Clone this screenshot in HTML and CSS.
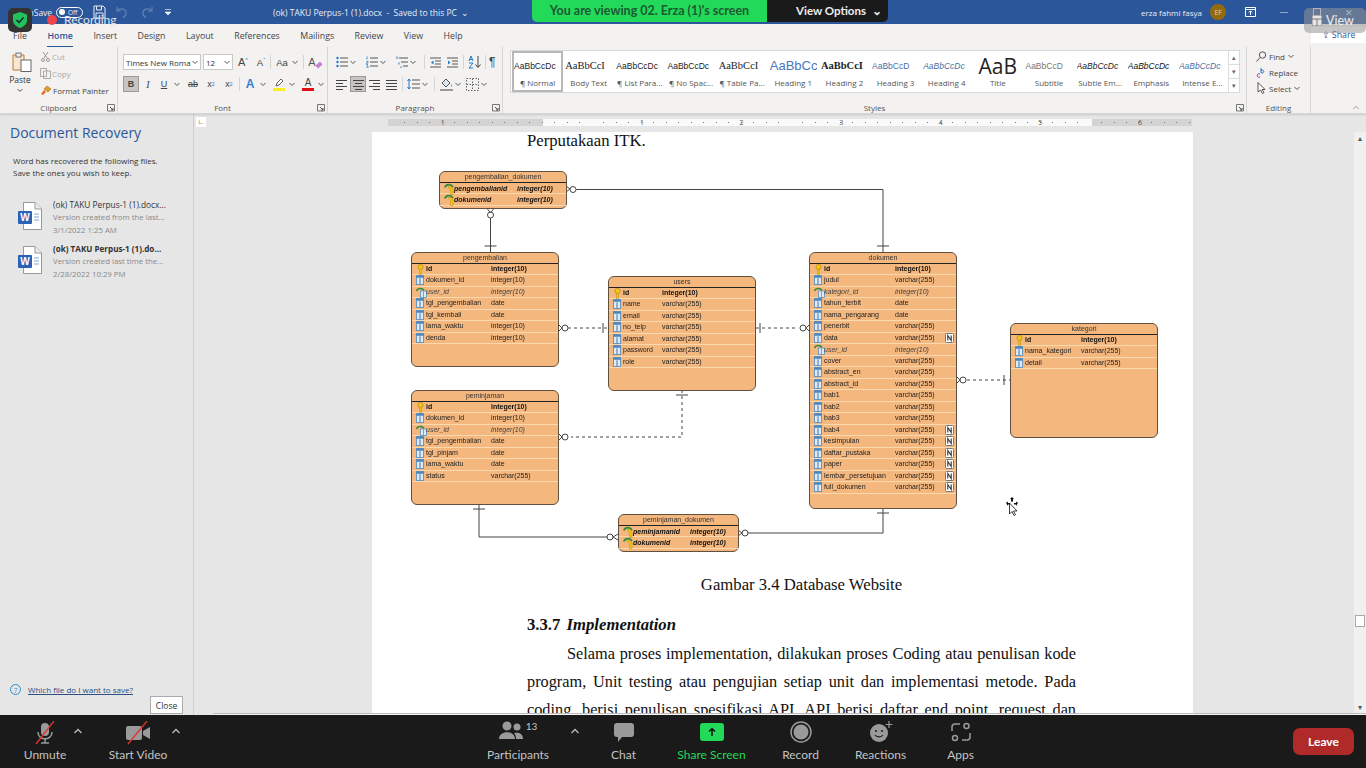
FILE: index.html

```html
<!DOCTYPE html>
<html lang="id">
<head>
  <meta charset="UTF-8">
  <title>(ok) TAKU Perpus-1 (1).docx - Word</title>
  <link rel="stylesheet" href="styles.css">
</head>
<body>

  <svg class="defs" width="0" height="0">
    <symbol id="i-col" viewBox="0 0 9 11"><rect x=".5" y=".5" width="8" height="10" fill="#dfeaf5" stroke="#5a8fc0"/><rect x=".5" y=".5" width="8" height="2.5" fill="#4a86c0"/><path d="M4.5 3.5v7" stroke="#5a8fc0" stroke-width="1.4"/></symbol>
    <symbol id="i-key" viewBox="0 0 9 11"><circle cx="4.5" cy="3" r="2.6" fill="#f5c518" stroke="#b98a10" stroke-width=".7"/><path d="M3.6 5h1.8v5.5h-1.8z" fill="#f5c518" stroke="#b98a10" stroke-width=".5"/></symbol>
    <symbol id="i-fk" viewBox="0 0 11 11"><path d="M.5 4C1.5 1 6 .5 8 3.5" fill="none" stroke="#2f8a3c" stroke-width="1.6"/><rect x="4.5" y="4" width="6" height="6.5" fill="#dfeaf5" stroke="#5a8fc0" stroke-width=".8"/><path d="M7.5 4.5v6" stroke="#5a8fc0" stroke-width=".8"/></symbol>
    <symbol id="i-pfk" viewBox="0 0 12 12"><path d="M5 3c2.500.3 4 2 4 4v4.500H6.500V7.500C6.500 6 5.500 5 4 4.500z" fill="#f5c518" stroke="#b98a10" stroke-width=".5"/><path d="M.8 4.500C2 1 7 .5 9 4" fill="none" stroke="#2f8a3c" stroke-width="1.700"/></symbol>
    <symbol id="i-null" viewBox="0 0 9 10"><rect x=".5" y=".5" width="8" height="9" rx="1" fill="#fff" stroke="#777"/><path d="M2.8 7.5v-5l3.4 5v-5" fill="none" stroke="#333" stroke-width="1.1"/></symbol>
    <symbol id="i-chev" viewBox="0 0 8 8"><path d="M1.5 3l2.500 2.500L6.500 3" fill="none" stroke="#555" stroke-width="1"/></symbol>
    <symbol id="i-caret" viewBox="0 0 10 6"><path d="M1.500 5L5 1.500 8.500 5" fill="none" stroke="#bbb" stroke-width="1.300"/></symbol>
    <symbol id="i-launch" viewBox="0 0 8 8"><path d="M.5 7V.5H7.5V7z" fill="none" stroke="#777"/><path d="M3 3l3 3M6 4v2H4" fill="none" stroke="#555"/></symbol>
    <symbol id="i-list" viewBox="0 0 12 12"><g fill="#1e78c8"><circle cx="1.5" cy="2" r="1.2"/><circle cx="1.5" cy="6" r="1.2"/><circle cx="1.5" cy="10" r="1.2"/></g><path d="M4 2h8M4 6h8M4 10h8" stroke="#555"/></symbol>
    <symbol id="i-numlist" viewBox="0 0 12 12"><path d="M1 .5v3M.5 5.5h1.500v1.500H.5v1.500H2M.5 10h1.500v2H.5" fill="none" stroke="#1e78c8" stroke-width=".8"/><path d="M4 2h8M4 6h8M4 10h8" stroke="#555"/></symbol>
    <symbol id="i-multi" viewBox="0 0 12 12"><path d="M1 .5v2.500M3 6.500v2M5 10.500v1.500" stroke="#1e78c8"/><path d="M3 2h9M5 6h7M7 10h5" stroke="#555"/></symbol>
    <symbol id="i-outdent" viewBox="0 0 11 11"><path d="M0 1h11M5 4h6M5 7h6M0 10h11" stroke="#555"/><path d="M3.500 3.500L1 5.500l2.500 2z" fill="#1e78c8"/></symbol>
    <symbol id="i-indent" viewBox="0 0 11 11"><path d="M0 1h11M5 4h6M5 7h6M0 10h11" stroke="#555"/><path d="M1 3.500l2.500 2-2.500 2z" fill="#1e78c8"/></symbol>
    <symbol id="i-left" viewBox="0 0 11 11"><path d="M0 1.500h11M0 4.500h7M0 7.500h11M0 10.500h7" stroke="#444"/></symbol>
    <symbol id="i-center" viewBox="0 0 11 11"><path d="M0 1.500h11M2 4.500h7M0 7.500h11M2 10.500h7" stroke="#444"/></symbol>
    <symbol id="i-right" viewBox="0 0 11 11"><path d="M0 1.500h11M4 4.500h7M0 7.500h11M4 10.500h7" stroke="#444"/></symbol>
    <symbol id="i-justify" viewBox="0 0 11 11"><path d="M0 1.500h11M0 4.500h11M0 7.500h11M0 10.500h11" stroke="#444"/></symbol>
    <symbol id="i-word" viewBox="0 0 24 28"><path d="M5.500.5H17l6.500 6.500v20.500h-18z" fill="#fff" stroke="#999"/><path d="M17 .5V7h6.500" fill="#eee" stroke="#999"/><path d="M16 12h5M16 15h5M16 18h5" stroke="#7fa6d6"/><rect y="9" width="14" height="13" rx="1" fill="#2b62b8"/></symbol>
  </svg>

  <header class="titlebar">
    <span class="qa-text">AutoSave</span>
    <span class="toggle"><i class="toggle-dot"></i>Off</span>
    <svg class="qa-save" width="13" height="14" viewBox="0 0 13 14"><path d="M1 1h9l2 2v10H1zM3.500 1v4h5V1M3 13V8h7v5" fill="none" stroke="#e8edf5"/></svg>
    <svg class="qa-undo" width="12" height="12" viewBox="0 0 12 12"><path d="M2 1v4h4M2 5c2-3 8-3 9 1 .5 2.500-1 4.500-3 5.500" fill="none" stroke="#5f7fb5" stroke-width="1.2"/></svg>
    <svg class="chev-dim" width="8" height="8"><use href="#i-chev"/></svg>
    <svg class="qa-redo" width="12" height="12" viewBox="0 0 12 12"><path d="M10 1v4H6M10 5C8 2 2 2 1 6c-.5 2.500 1 4.500 3 5.500" fill="none" stroke="#5f7fb5" stroke-width="1.2"/></svg>
    <svg class="qa-more" width="8" height="8" viewBox="0 0 8 8"><path d="M1 1.500h6M1 4l3 3 3-3z" fill="#e8edf5" stroke="#e8edf5" stroke-width=".7"/></svg>
    <span class="doc-title">(ok) TAKU Perpus-1 (1).docx &nbsp;-&nbsp; Saved to this PC &nbsp;⌄</span>
    <span class="user-name">erza fahmi fasya</span>
    <span class="avatar">EF</span>
    <svg class="win-display" width="11" height="10" viewBox="0 0 11 10"><path d="M.5.5h10v9H.5zM.5 2.500h10M5.500 8V4M3.800 5.500l1.700-1.700 1.700 1.700" fill="none" stroke="#fff"/></svg>
    <span class="win-min"></span>
    <span class="win-restore"></span>
    <span class="win-close">✕</span>
  </header>

  <nav class="tabs">
    <span>File</span>
    <span class="tab-active">Home</span>
    <span>Insert</span>
    <span>Design</span>
    <span>Layout</span>
    <span>References</span>
    <span>Mailings</span>
    <span>Review</span>
    <span>View</span>
    <span>Help</span>
    <span class="share-btn">⇪ Share</span>
  </nav>

  <section class="ribbon">
    <div class="group g-clipboard">
      <div class="group-body clip-body">
        <div class="paste">
          <svg class="paste-ic" width="20" height="20" viewBox="0 0 20 20"><path d="M1 3h11v15H1z" fill="#f6e6d2" stroke="#c8762a"/><rect x="4" y="1" width="5" height="4" fill="#eee" stroke="#777"/><rect x="9" y="8" width="10" height="11.500" fill="#fff" stroke="#666"/></svg>
          <span>Paste</span>
          <svg width="8" height="8"><use href="#i-chev"/></svg>
        </div>
        <div class="clip-list">
          <span class="dim"><svg width="11" height="11" viewBox="0 0 11 11"><path d="M3 1l4 6M8 1L4 7" stroke="#999"/><circle cx="3" cy="9" r="1.500" fill="none" stroke="#999"/><circle cx="8" cy="9" r="1.500" fill="none" stroke="#999"/></svg>Cut</span>
          <span class="dim"><svg width="11" height="11" viewBox="0 0 11 11"><path d="M.5.5h6v8h-6zM3.500 3h7v7.500h-7z" fill="#f3f2f1" stroke="#aaa"/></svg>Copy</span>
          <span><svg width="12" height="11" viewBox="0 0 12 11"><path d="M7 1l4 3-3 3-4-3z" fill="#e0a030" stroke="#a86a10" stroke-width=".6"/><path d="M4 5L1 9l2 1 3-3" fill="#e86a20"/></svg>Format Painter</span>
        </div>
      </div>
      <div class="group-label">Clipboard<svg class="launch" width="8" height="8"><use href="#i-launch"/></svg></div>
    </div>

    <div class="group g-font">
      <div class="group-body">
        <div class="row">
          <span class="combo combo-font">Times New Roma<svg width="8" height="8"><use href="#i-chev"/></svg></span>
          <span class="combo combo-size">12<svg width="8" height="8"><use href="#i-chev"/></svg></span>
          <span class="btn w16 ml2 glyph">A<sup>^</sup></span>
          <span class="btn w16 ml2 glyph small-a">A<sup>ˇ</sup></span>
          <i class="sep ml1"></i>
          <span class="btn w16 ml3 glyph small-a">Aa</span><svg class="chev" width="8" height="8"><use href="#i-chev"/></svg>
          <i class="sep ml3"></i>
          <span class="btn w16 ml3 glyph clear">A<i class="eraser"></i></span>
        </div>
        <div class="row">
          <span class="btn w16 on bold">B</span>
          <span class="btn w16 ml1 serif-i">I</span>
          <span class="btn w16 under">U</span><svg class="chev" width="8" height="8"><use href="#i-chev"/></svg>
          <span class="btn w16 ml3 strike">ab</span>
          <span class="btn w16 ml2 sub">x<sub>2</sub></span>
          <span class="btn w16 ml2 sub">x<sup>2</sup></span>
          <i class="sep ml2"></i>
          <span class="btn w16 ml2 effect">A</span><svg class="chev" width="8" height="8"><use href="#i-chev"/></svg>
          <span class="btn w16 ml3 hl"><svg width="12" height="10" viewBox="0 0 12 10"><path d="M3 8l1-3 4-4 2 2-4 4z" fill="#fff" stroke="#666"/></svg><i class="bar bar-y"></i></span><svg class="chev" width="8" height="8"><use href="#i-chev"/></svg>
          <span class="btn w16 ml3 hl letter">A<i class="bar bar-r"></i></span><svg class="chev" width="8" height="8"><use href="#i-chev"/></svg>
        </div>
      </div>
      <div class="group-label">Font<svg class="launch" width="8" height="8"><use href="#i-launch"/></svg></div>
    </div>

    <div class="group g-para">
      <div class="group-body">
        <div class="row">
          <svg class="ic" width="12" height="12"><use href="#i-list"/></svg><svg class="chev" width="8" height="8"><use href="#i-chev"/></svg>
          <svg class="ic ml8" width="12" height="12"><use href="#i-numlist"/></svg><svg class="chev" width="8" height="8"><use href="#i-chev"/></svg>
          <svg class="ic ml8" width="12" height="12"><use href="#i-multi"/></svg><svg class="chev" width="8" height="8"><use href="#i-chev"/></svg>
          <i class="sep ml6"></i>
          <svg class="ic ml5" width="11" height="11"><use href="#i-outdent"/></svg>
          <svg class="ic ml6" width="11" height="11"><use href="#i-indent"/></svg>
          <i class="sep ml5"></i>
          <svg class="ic ml4" width="13" height="14" viewBox="0 0 13 14"><path d="M1 6l2-5 2 5M1.500 4.500h3M1 8h4L1 13h4" fill="none" stroke="#1e78c8"/><path d="M10 1v11M7.500 9.500l2.500 3 2.500-3" fill="none" stroke="#444"/></svg>
          <i class="sep ml4"></i>
          <span class="pilcrow ml3">¶</span>
        </div>
        <div class="row">
          <svg class="ic" width="11" height="11"><use href="#i-left"/></svg>
          <span class="btn w16 on ml3"><svg width="11" height="11"><use href="#i-center"/></svg></span>
          <svg class="ic ml3" width="11" height="11"><use href="#i-right"/></svg>
          <svg class="ic ml6" width="11" height="11"><use href="#i-justify"/></svg>
          <i class="sep ml5"></i>
          <svg class="ic ml4" width="13" height="12" viewBox="0 0 13 12"><path d="M2 1v10M.5 3L2 1l1.500 2M.5 9L2 11l1.500-2" fill="none" stroke="#1e78c8"/><path d="M5 2h8M5 6h8M5 10h8" stroke="#555"/></svg><svg class="chev" width="8" height="8"><use href="#i-chev"/></svg>
          <i class="sep ml4"></i>
          <svg class="ic ml5" width="13" height="13" viewBox="0 0 13 13"><path d="M6 1L2 5l4 4 4-4z" fill="#dbe7f3" stroke="#555"/><path d="M11 6c1 1.500 1 2.500 0 3z" fill="#1e78c8"/><path d="M0 12h13" stroke="#999" stroke-width="2"/></svg><svg class="chev" width="8" height="8"><use href="#i-chev"/></svg>
          <svg class="ic ml3" width="13" height="13" viewBox="0 0 13 13"><path d="M.5.500h12v12H.5zM.5 6.500h12M6.500.500v12" fill="none" stroke="#666" stroke-dasharray="1.500 1.500"/></svg><svg class="chev" width="8" height="8"><use href="#i-chev"/></svg>
        </div>
      </div>
      <div class="group-label">Paragraph<svg class="launch" width="8" height="8"><use href="#i-launch"/></svg></div>
    </div>

    <div class="group g-styles">
      <div class="group-body gallery-wrap">
        <div class="gallery">
          <div class="style sel"><b class="s-sm">AaBbCcDc</b><span>¶ Normal</span></div>
          <div class="style"><b class="s-serif">AaBbCcI</b><span>Body Text</span></div>
          <div class="style"><b class="s-sm">AaBbCcDc</b><span>¶ List Para...</span></div>
          <div class="style"><b class="s-sm">AaBbCcDc</b><span>¶ No Spac...</span></div>
          <div class="style"><b class="s-serif">AaBbCcI</b><span>¶ Table Pa...</span></div>
          <div class="style"><b class="s-h1">AaBbCc</b><span>Heading 1</span></div>
          <div class="style"><b class="s-serif s-strong">AaBbCcI</b><span>Heading 2</span></div>
          <div class="style"><b class="s-sm s-blue">AaBbCcD</b><span>Heading 3</span></div>
          <div class="style"><b class="s-sm s-blue s-it">AaBbCcDc</b><span>Heading 4</span></div>
          <div class="style"><b class="s-title">AaB</b><span>Title</span></div>
          <div class="style"><b class="s-sm s-grey">AaBbCcD</b><span>Subtitle</span></div>
          <div class="style"><b class="s-sm s-it">AaBbCcDc</b><span>Subtle Em...</span></div>
          <div class="style"><b class="s-sm s-it s-dark">AaBbCcDc</b><span>Emphasis</span></div>
          <div class="style"><b class="s-sm s-it s-blue">AaBbCcDc</b><span>Intense E...</span></div>
          <div class="gal-scroll"><i>▴</i><i>▾</i><i>▾</i></div>
        </div>
      </div>
      <div class="group-label">Styles<svg class="launch" width="8" height="8"><use href="#i-launch"/></svg></div>
    </div>

    <div class="group g-edit">
      <div class="group-body edit-list">
        <span><svg width="11" height="11" viewBox="0 0 11 11"><circle cx="6.500" cy="4" r="3.200" fill="none" stroke="#555"/><path d="M4 6.500L.5 10.500" stroke="#555"/></svg>Find<svg width="8" height="8"><use href="#i-chev"/></svg></span>
        <span><svg width="11" height="11" viewBox="0 0 11 11"><path d="M5 1v4.500M5 3.500a1.500 1.500 0 1 1 0 2" fill="none" stroke="#2b6cc4"/><path d="M4 7a1.800 1.800 0 1 0 0 3" fill="none" stroke="#8a3ab0"/></svg>Replace</span>
        <span><svg width="11" height="12" viewBox="0 0 11 12"><path d="M2 .5v9.500l2.500-2 2 3.500 1.500-1L6 7.500h3z" fill="#fff" stroke="#555"/></svg>Select<svg width="8" height="8"><use href="#i-chev"/></svg></span>
      </div>
      <div class="group-label">Editing</div>
    </div>
    <svg class="collapse" width="8" height="5"><use href="#i-caret"/></svg>
  </section>

  <div class="work">
    <aside class="recovery">
      <h2>Document Recovery</h2>
      <p class="rec-note">Word has recovered the following files.<br>Save the ones you wish to keep.</p>
      <div class="rec-file">
        <span class="word-ic"><svg width="24" height="28"><use href="#i-word"/></svg><b>W</b></span>
        <div>
          <div class="rec-name">(ok) TAKU Perpus-1 (1).docx...</div>
          <div class="rec-sub">Version created from the last...</div>
          <div class="rec-sub">3/1/2022 1:25 AM</div>
        </div>
      </div>
      <div class="rec-file">
        <span class="word-ic"><svg width="24" height="28"><use href="#i-word"/></svg><b>W</b></span>
        <div>
          <div class="rec-name rec-bold">(ok) TAKU Perpus-1 (1).do...</div>
          <div class="rec-sub">Version created last time the...</div>
          <div class="rec-sub">2/28/2022 10:29 PM</div>
        </div>
      </div>
      <div class="rec-foot">
        <div class="rec-help"><span class="help-ic">?</span><a>Which file do I want to save?</a></div>
        <button class="rec-close">Close</button>
      </div>
    </aside>

    <main class="docarea">
      <div class="ruler-row">
        <span class="tab-sel">∟</span>
        <div class="ruler">
          <span>1</span><span></span><span>1</span><span>2</span><span>3</span><span>4</span><span>5</span><span>6</span>
        </div>
      </div>
      <div class="doc-row">
        <div class="doc-scroll">
          <article class="page">
            <p class="doc-line">Perputakaan ITK.</p>

            <div class="diagram">
              <svg class="links" width="750" height="400" viewBox="0 0 750 400">
                <g fill="none" stroke="#444" stroke-width="1">
                  <path d="M162 29.500H472V92M466 86h12"/>
                  <path d="M79.500 55V92M73.500 86h12"/>
                  <path d="M68 344V377H199M62 349h12"/>
                  <path d="M337 373H472V348M466 353h12"/>
                  <g stroke-dasharray="3 3">
                    <path d="M157 168H197"/>
                    <path d="M345 168H386"/>
                    <path d="M556 220H599"/>
                    <path d="M271 230V277H160"/>
                  </g>
                  <path d="M192 163v10M349 163v10M593 215v10M265 235h12"/>
                  <g fill="#fff">
                    <circle cx="162" cy="29.500" r="3"/>
                    <circle cx="79.500" cy="55" r="3"/>
                    <circle cx="154" cy="168" r="3"/>
                    <circle cx="392" cy="168" r="3"/>
                    <circle cx="552" cy="220" r="3"/>
                    <circle cx="154" cy="277" r="3"/>
                    <circle cx="199" cy="377" r="3"/>
                    <circle cx="334" cy="373" r="3"/>
                  </g>
                  <path d="M155 26l4 3-4 3M76.500 49l3 4 3-4M148 165l3 3-3 3M398 165l-3 3 3 3M546 217l3 3-3 3M148 274l3 3-3 3M207 374l-5 3 5 3M327 370l4 3-4 3"/>
                </g>
              </svg>

              <div class="entity e-pengdok">
                <div class="ent-name">pengembalian_dokumen</div>
                <div class="ent-row pk fk-key"><svg class="ent-ic" width="12" height="12"><use href="#i-pfk"/></svg><span>pengembalianid</span><span>integer(10)</span></div>
                <div class="ent-row pk fk-key"><svg class="ent-ic" width="12" height="12"><use href="#i-pfk"/></svg><span>dokumenid</span><span>integer(10)</span></div>
              </div>

              <div class="entity e-pengembalian">
                <div class="ent-name">pengembalian</div>
                <div class="ent-row pk"><svg class="ent-ic" width="9" height="11"><use href="#i-key"/></svg><span>id</span><span>integer(10)</span></div>
                <div class="ent-row"><svg class="ent-ic" width="8" height="10"><use href="#i-col"/></svg><span>dokumen_id</span><span>integer(10)</span></div>
                <div class="ent-row fk"><svg class="ent-ic" width="11" height="11"><use href="#i-fk"/></svg><span>user_id</span><span>integer(10)</span></div>
                <div class="ent-row"><svg class="ent-ic" width="8" height="10"><use href="#i-col"/></svg><span>tgl_pengembalian</span><span>date</span></div>
                <div class="ent-row"><svg class="ent-ic" width="8" height="10"><use href="#i-col"/></svg><span>tgl_kembali</span><span>date</span></div>
                <div class="ent-row"><svg class="ent-ic" width="8" height="10"><use href="#i-col"/></svg><span>lama_waktu</span><span>integer(10)</span></div>
                <div class="ent-row"><svg class="ent-ic" width="8" height="10"><use href="#i-col"/></svg><span>denda</span><span>integer(10)</span></div>
              </div>

              <div class="entity e-users">
                <div class="ent-name">users</div>
                <div class="ent-row pk"><svg class="ent-ic" width="9" height="11"><use href="#i-key"/></svg><span>id</span><span>integer(10)</span></div>
                <div class="ent-row"><svg class="ent-ic" width="8" height="10"><use href="#i-col"/></svg><span>name</span><span>varchar(255)</span></div>
                <div class="ent-row"><svg class="ent-ic" width="8" height="10"><use href="#i-col"/></svg><span>email</span><span>varchar(255)</span></div>
                <div class="ent-row"><svg class="ent-ic" width="8" height="10"><use href="#i-col"/></svg><span>no_telp</span><span>varchar(255)</span></div>
                <div class="ent-row"><svg class="ent-ic" width="8" height="10"><use href="#i-col"/></svg><span>alamat</span><span>varchar(255)</span></div>
                <div class="ent-row"><svg class="ent-ic" width="8" height="10"><use href="#i-col"/></svg><span>password</span><span>varchar(255)</span></div>
                <div class="ent-row"><svg class="ent-ic" width="8" height="10"><use href="#i-col"/></svg><span>role</span><span>varchar(255)</span></div>
              </div>

              <div class="entity e-dokumen">
                <div class="ent-name">dokumen</div>
                <div class="ent-row pk"><svg class="ent-ic" width="9" height="11"><use href="#i-key"/></svg><span>id</span><span>integer(10)</span></div>
                <div class="ent-row"><svg class="ent-ic" width="8" height="10"><use href="#i-col"/></svg><span>judul</span><span>varchar(255)</span></div>
                <div class="ent-row fk"><svg class="ent-ic" width="11" height="11"><use href="#i-fk"/></svg><span>kategori_id</span><span>integer(10)</span></div>
                <div class="ent-row"><svg class="ent-ic" width="8" height="10"><use href="#i-col"/></svg><span>tahun_terbit</span><span>date</span></div>
                <div class="ent-row"><svg class="ent-ic" width="8" height="10"><use href="#i-col"/></svg><span>nama_pengarang</span><span>date</span></div>
                <div class="ent-row"><svg class="ent-ic" width="8" height="10"><use href="#i-col"/></svg><span>penerbit</span><span>varchar(255)</span></div>
                <div class="ent-row"><svg class="ent-ic" width="8" height="10"><use href="#i-col"/></svg><span>data</span><span>varchar(255)</span><svg width="9" height="10"><use href="#i-null"/></svg></div>
                <div class="ent-row fk"><svg class="ent-ic" width="11" height="11"><use href="#i-fk"/></svg><span>user_id</span><span>integer(10)</span></div>
                <div class="ent-row"><svg class="ent-ic" width="8" height="10"><use href="#i-col"/></svg><span>cover</span><span>varchar(255)</span></div>
                <div class="ent-row"><svg class="ent-ic" width="8" height="10"><use href="#i-col"/></svg><span>abstract_en</span><span>varchar(255)</span></div>
                <div class="ent-row"><svg class="ent-ic" width="8" height="10"><use href="#i-col"/></svg><span>abstract_id</span><span>varchar(255)</span></div>
                <div class="ent-row"><svg class="ent-ic" width="8" height="10"><use href="#i-col"/></svg><span>bab1</span><span>varchar(255)</span></div>
                <div class="ent-row"><svg class="ent-ic" width="8" height="10"><use href="#i-col"/></svg><span>bab2</span><span>varchar(255)</span></div>
                <div class="ent-row"><svg class="ent-ic" width="8" height="10"><use href="#i-col"/></svg><span>bab3</span><span>varchar(255)</span></div>
                <div class="ent-row"><svg class="ent-ic" width="8" height="10"><use href="#i-col"/></svg><span>bab4</span><span>varchar(255)</span><svg width="9" height="10"><use href="#i-null"/></svg></div>
                <div class="ent-row"><svg class="ent-ic" width="8" height="10"><use href="#i-col"/></svg><span>kesimpulan</span><span>varchar(255)</span><svg width="9" height="10"><use href="#i-null"/></svg></div>
                <div class="ent-row"><svg class="ent-ic" width="8" height="10"><use href="#i-col"/></svg><span>daftar_pustaka</span><span>varchar(255)</span><svg width="9" height="10"><use href="#i-null"/></svg></div>
                <div class="ent-row"><svg class="ent-ic" width="8" height="10"><use href="#i-col"/></svg><span>paper</span><span>varchar(255)</span><svg width="9" height="10"><use href="#i-null"/></svg></div>
                <div class="ent-row"><svg class="ent-ic" width="8" height="10"><use href="#i-col"/></svg><span>lembar_persetujuan</span><span>varchar(255)</span><svg width="9" height="10"><use href="#i-null"/></svg></div>
                <div class="ent-row"><svg class="ent-ic" width="8" height="10"><use href="#i-col"/></svg><span>full_dokumen</span><span>varchar(255)</span><svg width="9" height="10"><use href="#i-null"/></svg></div>
              </div>

              <div class="entity e-kategori">
                <div class="ent-name">kategori</div>
                <div class="ent-row pk"><svg class="ent-ic" width="9" height="11"><use href="#i-key"/></svg><span>id</span><span>integer(10)</span></div>
                <div class="ent-row"><svg class="ent-ic" width="8" height="10"><use href="#i-col"/></svg><span>nama_kategori</span><span>varchar(255)</span></div>
                <div class="ent-row"><svg class="ent-ic" width="8" height="10"><use href="#i-col"/></svg><span>detail</span><span>varchar(255)</span></div>
              </div>

              <div class="entity e-peminjaman">
                <div class="ent-name">peminjaman</div>
                <div class="ent-row pk"><svg class="ent-ic" width="9" height="11"><use href="#i-key"/></svg><span>id</span><span>integer(10)</span></div>
                <div class="ent-row"><svg class="ent-ic" width="8" height="10"><use href="#i-col"/></svg><span>dokumen_id</span><span>integer(10)</span></div>
                <div class="ent-row fk"><svg class="ent-ic" width="11" height="11"><use href="#i-fk"/></svg><span>user_id</span><span>integer(10)</span></div>
                <div class="ent-row"><svg class="ent-ic" width="8" height="10"><use href="#i-col"/></svg><span>tgl_pengembalian</span><span>date</span></div>
                <div class="ent-row"><svg class="ent-ic" width="8" height="10"><use href="#i-col"/></svg><span>tgl_pinjam</span><span>date</span></div>
                <div class="ent-row"><svg class="ent-ic" width="8" height="10"><use href="#i-col"/></svg><span>lama_waktu</span><span>date</span></div>
                <div class="ent-row"><svg class="ent-ic" width="8" height="10"><use href="#i-col"/></svg><span>status</span><span>varchar(255)</span></div>
              </div>

              <div class="entity e-pemdok">
                <div class="ent-name">peminjaman_dokumen</div>
                <div class="ent-row pk fk-key"><svg class="ent-ic" width="12" height="12"><use href="#i-pfk"/></svg><span>peminjamanid</span><span>integer(10)</span></div>
                <div class="ent-row pk fk-key"><svg class="ent-ic" width="12" height="12"><use href="#i-pfk"/></svg><span>dokumenid</span><span>integer(10)</span></div>
              </div>
            </div>

            <p class="caption">Gambar 3.4 Database Website</p>
            <h3 class="doc-head">3.3.7 <em>Implementation</em></h3>
            <p class="doc-para">Selama proses implementation, dilakukan proses Coding atau penulisan kode program, Unit testing atau pengujian setiap unit dan implementasi metode. Pada coding, berisi penulisan spesifikasi API. API berisi daftar end point, request dan</p>
          </article>
        </div>
        <div class="vscroll"><i>▴</i><span class="thumb"></span><i>▾</i></div>
      </div>
      <div class="hscroll"></div>
    </main>
  </div>

  <footer class="zoombar">
    <div class="z-left">
      <div class="z-btn w-unmute">
        <svg width="24" height="24" viewBox="0 0 24 24"><rect x="8" y="2" width="8" height="13" rx="4" fill="#9a9a9a"/><path d="M5 11c0 9 14 9 14 0M12 18v4M8 22h8" fill="none" stroke="#9a9a9a" stroke-width="1.5"/><path d="M3 23L21 0" stroke="#e0342c" stroke-width="1.3"/></svg>
        <span>Unmute</span>
      </div>
      <div class="z-caret c-16"><svg width="10" height="6"><use href="#i-caret"/></svg></div>
      <div class="z-btn w-video">
        <svg width="26" height="24" viewBox="0 0 26 24"><rect x="1" y="5" width="16" height="14" rx="2" fill="#9a9a9a"/><path d="M18 10l7-4v12l-7-4z" fill="#9a9a9a"/><path d="M3 23L22 0" stroke="#e0342c" stroke-width="1.3"/></svg>
        <span>Start Video</span>
      </div>
      <div class="z-caret c-10"><svg width="10" height="6"><use href="#i-caret"/></svg></div>
    </div>

    <div class="z-center">
      <div class="z-btn w-part">
        <div class="part-ic">
          <svg width="24" height="18" viewBox="0 0 24 18"><circle cx="8" cy="5" r="4.500" fill="#9a9a9a"/><circle cx="18" cy="6" r="3.500" fill="#9a9a9a"/><path d="M0 18c0-9 16-9 16 0zM17 18h7c0-6-5-7-9-6 1.500 1.500 2 3.500 2 6z" fill="#9a9a9a"/></svg>
          <small>13</small>
        </div>
        <span>Participants</span>
      </div>
      <div class="z-caret c-52"><svg width="10" height="6"><use href="#i-caret"/></svg></div>
      <div class="z-btn w-chat">
        <svg width="22" height="22" viewBox="0 0 22 22"><path d="M4 2h14a3 3 0 0 1 3 3v8a3 3 0 0 1-3 3H9l-4 5v-5H4a3 3 0 0 1-3-3V5a3 3 0 0 1 3-3z" fill="#9a9a9a"/></svg>
        <span>Chat</span>
      </div>
      <div class="z-btn w-share">
        <div class="share-ic"><svg width="10" height="10" viewBox="0 0 10 10"><path d="M5 9V2M2 4.500L5 1.500l3 3" fill="none" stroke="#111" stroke-width="1.5"/></svg></div>
        <span class="green">Share Screen</span>
      </div>
      <div class="z-btn w-rec">
        <svg width="22" height="22" viewBox="0 0 22 22"><circle cx="11" cy="11" r="10" fill="none" stroke="#9a9a9a" stroke-width="1.5"/><circle cx="11" cy="11" r="7.500" fill="#9a9a9a"/></svg>
        <span>Record</span>
      </div>
      <div class="z-btn w-react">
        <svg width="24" height="22" viewBox="0 0 24 22"><circle cx="10" cy="12" r="9" fill="#9a9a9a"/><circle cx="7" cy="10" r="1" fill="#1a1a1a"/><circle cx="13" cy="10" r="1" fill="#1a1a1a"/><path d="M6 14c1.500 2.500 6.500 2.500 8 0" fill="none" stroke="#1a1a1a" stroke-width="1.1"/><path d="M20 0v7M16.500 3.500h7" stroke="#9a9a9a" stroke-width="1.2"/></svg>
        <span>Reactions</span>
      </div>
      <div class="z-btn w-apps">
        <svg width="22" height="22" viewBox="0 0 22 22"><g fill="none" stroke="#9a9a9a" stroke-width="1.5"><path d="M2 10V6a3 3 0 0 1 3-3h5M20 12v4a3 3 0 0 1-3 3h-5"/><circle cx="16.500" cy="5" r="2.500"/><circle cx="5" cy="17" r="2.500"/></g></svg>
        <span>Apps</span>
      </div>
    </div>

    <button class="leave">Leave</button>
  </footer>

  <!-- zoom overlays on top of the shared screen -->
  <div class="banner">
    <span class="banner-green">You are viewing 02. Erza (1)'s screen</span>
    <span class="banner-dark">View Options &nbsp;⌄</span>
  </div>
  <div class="secure"><svg width="14" height="16" viewBox="0 0 14 16"><path d="M7 0l7 2.500V8c0 4-3 6.500-7 8-4-1.500-7-4-7-8V2.500z" fill="#22c25a"/><path d="M3.500 8l2.500 2.500L10.500 5.500" fill="none" stroke="#123" stroke-width="1.5"/></svg></div>
  <div class="recording"><i></i>Recording</div>
  <div class="view-pill"><svg width="10" height="11" viewBox="0 0 10 11"><path d="M0 0h10v11H0zM0 4h10M5 4v7" fill="#e6e6e6" stroke="#777"/></svg>View</div>
  <svg class="cursor" width="14" height="20" viewBox="0 0 14 20"><path d="M7 0l2 2H8v2.500H6V2H5zM1 6l2-1.500V6h2v1.500H3V9zM13 6l-2-1.500V6H9v1.500h2V9z" fill="#111"/><path d="M4.500 6v11l2.500-2.500 2 4 1.500-.8-2-3.700h3.500z" fill="#fff" stroke="#111" stroke-width=".8"/></svg>

</body>
</html>
```

FILE: styles.css

```css
* {
  box-sizing: border-box;
}

html, body {
  margin: 0;
  height: 100%;
}

body {
  width: 1366px;
  height: 768px;
  overflow: hidden;
  position: relative;
  display: flex;
  flex-direction: column;
  font-family: "Open Sans", "Liberation Sans", sans-serif;
  background-color: #e6e6e6;
}

.defs {
  position: absolute;
}

/* title bar */
.titlebar {
  height: 24px;
  flex: none;
  background-color: #2b579a;
  display: flex;
  align-items: center;
  color: #e8edf5;
  font-size: 8.5px;
  padding-left: 15px;
}

.qa-text {
  width: 41px;
  white-space: nowrap;
}

.toggle {
  width: 27px;
  height: 11px;
  border: 1px solid #fff;
  border-radius: 6px;
  display: flex;
  align-items: center;
  gap: 3px;
  font-size: 6.5px;
  padding-left: 2px;
}

.toggle-dot {
  width: 6px;
  height: 6px;
  border-radius: 50%;
  background-color: #fff;
}

.qa-save {
  margin-left: 10px;
}

.qa-undo {
  margin-left: 9px;
}

.chev-dim {
  opacity: .4;
}

.qa-redo {
  margin-left: 7px;
}

.qa-more {
  margin-left: 10px;
}

.doc-title {
  margin-left: 101px;
  width: 300px;
  white-space: nowrap;
}

.user-name {
  margin-left: 568px;
  width: 69px;
  white-space: nowrap;
  font-size: 8px;
}

.avatar {
  width: 16px;
  height: 16px;
  border-radius: 50%;
  background-color: #946a10;
  color: #e8d8a8;
  font-size: 6.5px;
  display: flex;
  align-items: center;
  justify-content: center;
}

.win-display {
  margin-left: 19px;
}

.win-min {
  width: 8px;
  height: 1px;
  background-color: #8fa7cc;
  margin-left: 24px;
}

.win-restore {
  width: 8px;
  height: 8px;
  border: 1px solid #d0d8e8;
  margin-left: 25px;
}

.win-close {
  margin-left: 24px;
  font-size: 9px;
  color: #d0d8e8;
}

/* tabs */
.tabs {
  height: 23px;
  flex: none;
  background-color: #f3f2f1;
  display: flex;
  align-items: center;
  gap: 20.5px;
  padding-left: 13px;
  font-size: 8.8px;
  color: #444;
  position: relative;
}

.tabs span {
  position: relative;
}

.tab-active {
  color: #2b579a;
  font-weight: 600;
}

.tab-active::after {
  content: "";
  position: absolute;
  left: 0;
  right: 0;
  bottom: -6px;
  height: 2px;
  background-color: #2b579a;
}

.tabs .share-btn {
  margin-left: auto;
  background-color: #fff;
  height: 16px;
  width: 55px;
  color: #2b579a;
  display: flex;
  align-items: center;
  justify-content: center;
  align-self: flex-start;
  margin-top: 3px;
}

/* ribbon */
.ribbon {
  height: 67px;
  flex: none;
  background-color: #f3f2f1;
  border-bottom: 1px solid #d6d5d4;
  box-shadow: 0 1px 2px rgba(0, 0, 0, .12);
  display: flex;
  position: relative;
  z-index: 2;
  color: #444;
  font-size: 8.5px;
}

.group {
  height: 66px;
  flex: none;
  display: flex;
  flex-direction: column;
  border-right: 1px solid #d5d4d3;
}

.group-body {
  flex: 1;
  padding-top: 7px;
}

.group-label {
  height: 11px;
  text-align: center;
  font-size: 8px;
  color: #555;
  position: relative;
  line-height: 12px;
}

.launch {
  position: absolute;
  right: 2px;
  top: 2px;
}

.g-clipboard {
  width: 118px;
}

.g-font {
  width: 210px;
}

.g-para {
  width: 175px;
}

.g-styles {
  width: 744px;
}

.g-edit {
  width: 64px;
}

.clip-body {
  display: flex;
  padding-top: 4px;
}

.paste {
  width: 38px;
  padding-left: 2px;
  display: flex;
  flex-direction: column;
  align-items: center;
  gap: 1px;
  color: #333;
}

.paste-ic {
  margin: 1px 0 1px 4px;
}

.clip-list {
  display: flex;
  flex-direction: column;
  gap: 5px;
  margin: -1px 0 0 2px;
  white-space: nowrap;
  font-size: 8px;
}

.clip-list span {
  display: flex;
  align-items: center;
  gap: 1px;
  height: 12px;
}

.dim {
  color: #a8a8a8;
}

.row {
  height: 16px;
  display: flex;
  align-items: center;
  padding-left: 5px;
  margin-bottom: 6px;
}

.g-para .row {
  padding-left: 8px;
}

.combo {
  height: 16px;
  background-color: #fff;
  border: 1px solid #c8c8c8;
  display: flex;
  align-items: center;
  justify-content: space-between;
  font-size: 8px;
  padding: 0 1px 0 2px;
  white-space: nowrap;
  color: #333;
}

.combo-font {
  width: 78px;
}

.combo-size {
  width: 30px;
  margin-left: 2px;
}

.btn {
  height: 16px;
  display: inline-flex;
  align-items: center;
  justify-content: center;
  flex: none;
  position: relative;
  color: #444;
  font-family: "Liberation Sans", sans-serif;
}

.w16 {
  width: 16px;
}

.on {
  background-color: #c6c5c4;
  border: 1px solid #9a9a9a;
}

.ml1 { margin-left: 1px; }
.ml2 { margin-left: 2px; }
.ml3 { margin-left: 3px; }
.ml4 { margin-left: 4px; }
.ml5 { margin-left: 5px; }
.ml6 { margin-left: 6px; }
.ml8 { margin-left: 8px; }

.sep {
  width: 1px;
  height: 14px;
  background-color: #d5d4d3;
  flex: none;
}

.chev {
  flex: none;
  margin: 0 1px;
}

.ic {
  flex: none;
}

.glyph {
  font-size: 11px;
}

.glyph sup {
  font-size: 6px;
  color: #1e78c8;
  margin-top: -5px;
}

.small-a {
  font-size: 9.5px;
}

.clear {
  color: #555;
}

.eraser {
  width: 6px;
  height: 4px;
  background-color: #c880d8;
  transform: rotate(-40deg);
  margin-top: 6px;
}

.bold {
  font-weight: bold;
  font-size: 9px;
}

.serif-i {
  font-family: "Liberation Serif", serif;
  font-style: italic;
  font-size: 10px;
}

.under {
  text-decoration: underline;
  font-size: 9px;
}

.strike {
  text-decoration: line-through;
  font-size: 9px;
}

.sub {
  font-size: 9px;
}

.sub sub, .sub sup {
  font-size: 5px;
  color: #1e78c8;
}

.effect {
  color: #2d7fd8;
  font-weight: bold;
  font-size: 12px;
}

.hl {
  flex-direction: column;
}

.letter {
  font-size: 10px;
  line-height: 11px;
}

.bar {
  width: 12px;
  height: 3px;
}

.bar-y {
  background-color: #f8ee20;
}

.bar-r {
  background-color: #e01010;
}

.pilcrow {
  font-size: 12px;
  color: #444;
  font-family: "Liberation Sans", sans-serif;
}

/* styles gallery */
.gallery-wrap {
  padding: 3px 0 0 7px;
}

.gallery {
  width: 730px;
  height: 43px;
  background-color: #fff;
  border: 1px solid #d8d8d8;
  display: flex;
  padding-left: 1px;
}

.style {
  width: 51.15px;
  flex: none;
  height: 41px;
  display: flex;
  flex-direction: column;
  align-items: center;
  overflow: hidden;
  padding-top: 4px;
}

.style.sel {
  border: 2px solid #b8b8b8;
  padding-top: 2px;
}

.style b {
  height: 22px;
  line-height: 22px;
  font-weight: normal;
  white-space: nowrap;
  color: #222;
  width: 47px;
  overflow: hidden;
  text-align: left;
}

.style span {
  font-size: 8px;
  color: #555;
  white-space: nowrap;
}

.s-sm {
  font-family: "Liberation Sans", sans-serif;
  font-size: 8.5px;
}

.style b.s-serif {
  font-family: "Liberation Serif", serif;
  font-size: 10.5px;
}

.style b.s-strong {
  font-weight: bold;
}

.style b.s-h1 {
  font-size: 13px;
  color: #4a78c0;
  font-family: "Liberation Sans", sans-serif;
}

.style b.s-blue {
  color: #4a70a8;
}

.s-it {
  font-style: italic;
}

.style b.s-grey {
  color: #777;
}

.style b.s-dark {
  color: #111;
}

.style b.s-title {
  font-size: 21px;
  text-align: center;
  font-family: "Open Sans", sans-serif;
}

.gal-scroll {
  width: 11px;
  height: 41px;
  margin-left: auto;
  display: flex;
  flex-direction: column;
  border-left: 1px solid #ddd;
}

.gal-scroll i {
  flex: 1;
  font-style: normal;
  font-size: 7px;
  color: #666;
  text-align: center;
  line-height: 13px;
  border-bottom: 1px solid #ddd;
}

/* editing */
.edit-list {
  padding: 1px 0 0 9px;
  display: flex;
  flex-direction: column;
  font-size: 8px;
}

.edit-list span {
  height: 16px;
  display: flex;
  align-items: center;
  gap: 2px;
  white-space: nowrap;
}

.collapse {
  position: absolute;
  right: 6px;
  bottom: 3px;
}

/* word work area */
.work {
  height: 601px;
  flex: none;
  display: flex;
}

.recovery {
  width: 194px;
  flex: none;
  border-right: 1px solid #cfcfcf;
  background-color: #e6e6e6;
  padding: 0 10px;
  display: flex;
  flex-direction: column;
}

.recovery h2 {
  font-size: 14px;
  font-weight: normal;
  color: #2b579a;
  margin: 9px 0 0;
  line-height: 20px;
}

.rec-note {
  font-size: 8px;
  line-height: 12px;
  color: #333;
  margin: 12px 0 0 3px;
}

.rec-file {
  display: flex;
  gap: 11px;
  margin: 19px 0 -2px 8px;
  line-height: 13px;
  white-space: nowrap;
}

.rec-file + .rec-file {
  margin-top: 7px;
}

.word-ic {
  position: relative;
  width: 24px;
  height: 28px;
  margin-top: 4px;
}

.word-ic b {
  position: absolute;
  left: 0;
  top: 9px;
  width: 14px;
  text-align: center;
  color: #fff;
  font-size: 10px;
  line-height: 13px;
  font-family: "Liberation Sans", sans-serif;
}

.rec-name {
  color: #333;
  font-size: 8.3px;
}

.rec-bold {
  font-weight: bold;
  font-size: 8.1px;
}

.rec-sub {
  color: #888;
  font-size: 7.8px;
}

.rec-foot {
  margin-top: auto;
  font-size: 8px;
  padding-bottom: 1px;
}

.rec-help {
  display: flex;
  align-items: center;
  gap: 7px;
}

.rec-help a {
  color: #2b4f80;
  text-decoration: underline;
}

.help-ic {
  width: 11px;
  height: 11px;
  border-radius: 50%;
  border: 1px solid #2f8fd0;
  color: #2f8fd0;
  font-size: 8px;
  line-height: 9px;
  text-align: center;
}

.rec-close {
  display: block;
  margin: 1px 0 0 auto;
  width: 33px;
  height: 18px;
  padding: 0;
  background-color: #fff;
  border: 1px solid #aaa;
  font-family: inherit;
  font-size: 8.5px;
  color: #333;
}

.docarea {
  flex: 1;
  min-width: 0;
  display: flex;
  flex-direction: column;
}

.ruler-row {
  height: 18px;
  flex: none;
  position: relative;
  display: flex;
  padding: 5px 0 0 194px;
}

.tab-sel {
  position: absolute;
  left: 2px;
  top: 3px;
  width: 10px;
  height: 10px;
  background-color: #fff;
  font-size: 7px;
  line-height: 10px;
  text-align: center;
  color: #333;
}

.ruler {
  width: 804px;
  height: 7px;
  display: flex;
  padding-left: 5px;
  background:
    linear-gradient(#9996, #9996) 0 0 / 155px 100% no-repeat,
    linear-gradient(#9996, #9996) 704px 0 / 100px 100% no-repeat,
    #fafafa;
  font-size: 7px;
  line-height: 7px;
  color: #555;
}

.ruler span {
  width: 99.6px;
  text-align: center;
  flex: none;
  background: repeating-linear-gradient(90deg, transparent 0 11.45px, #777 11.45px 12.45px) 0 3px / 100% 1px no-repeat;
}

.doc-row {
  flex: 1;
  min-height: 0;
  display: flex;
}

.doc-scroll {
  flex: 1;
  padding-left: 178px;
  min-width: 0;
}

.page {
  width: 821px;
  height: 100%;
  overflow: hidden;
  background-color: #fff;
  padding: 0 117px 0 155px;
  font-family: "Liberation Serif", serif;
  font-size: 16.7px;
  color: #111;
}

.doc-line {
  margin: 0;
  line-height: 18px;
}

.caption {
  margin: 16px 0 0;
  line-height: 18px;
  text-align: center;
}

.doc-head {
  margin: 22px 0 0;
  font-size: 16.7px;
  line-height: 18px;
}

.doc-head em {
  margin-left: 2px;
}

.doc-para {
  margin: 6px 0 0;
  font-size: 16.3px;
  line-height: 28px;
  text-indent: 40px;
  text-align: justify;
  text-align-last: justify;
}

.vscroll {
  width: 12px;
  flex: none;
  background-color: #f0f0f0;
  display: flex;
  flex-direction: column;
  align-items: center;
  justify-content: space-between;
  font-size: 8px;
  color: #555;
  position: relative;
}

.vscroll i {
  font-style: normal;
  line-height: 12px;
}

.thumb {
  position: absolute;
  top: 483px;
  width: 10px;
  height: 12px;
  background-color: #fff;
  border: 1px solid #aaa;
}

.hscroll {
  height: 2px;
  flex: none;
  margin-left: 19px;
  background-color: #f4f4f4;
  border-top: 1px solid #bbb;
}

/* er diagram, a free canvas in its own coordinates */
.diagram {
  position: relative;
  width: 750px;
  height: 400px;
  margin: 10px 0 0 -116px;
  font-family: "Liberation Sans", sans-serif;
  font-size: 7px;
  color: #222;
  filter: blur(.25px);
}

.links {
  position: absolute;
  left: 0;
  top: 0;
}

.entity {
  position: absolute;
  width: 148px;
  background-color: #f4b77e;
  border: 1px solid #5f5040;
  border-radius: 6px;
  --name: 65px;
}

.ent-name {
  height: 10.5px;
  line-height: 9.5px;
  text-align: center;
  border-bottom: 1px solid #222;
  color: #333;
}

.ent-row {
  height: 11.5px;
  padding-left: 4px;
  border-bottom: 1px solid #fad9ae;
  display: grid;
  grid-template-columns: 10px var(--name) 1fr 11px;
  align-items: center;
  line-height: 10px;
  white-space: nowrap;
}

.ent-ic {
  display: block;
}

.pk {
  font-weight: bold;
  color: #111;
}

.fk {
  font-style: italic;
  color: #444;
}

.fk-key {
  font-style: italic;
}

.e-pengdok {
  left: 28px;
  top: 11px;
  width: 128px;
  height: 38px;
  --name: 63px;
}

.e-pengembalian {
  left: 0;
  top: 92px;
  height: 115px;
}

.e-users {
  left: 197px;
  top: 116px;
  height: 115px;
  --name: 39px;
}

.e-dokumen {
  left: 398px;
  top: 92px;
  height: 257px;
  --name: 71px;
}

.e-kategori {
  left: 599px;
  top: 163px;
  height: 115px;
  --name: 56px;
}

.e-peminjaman {
  left: 0;
  top: 230px;
  height: 115px;
}

.e-pemdok {
  left: 207px;
  top: 354px;
  width: 121px;
  height: 38px;
  --name: 57px;
}

/* zoom toolbar */
.zoombar {
  height: 53px;
  flex: none;
  background-color: #1a1a1a;
  display: flex;
  align-items: stretch;
  color: #c4c4c4;
  position: relative;
}

.z-left, .z-center {
  display: flex;
  align-items: stretch;
}

.z-left {
  width: 487px;
  flex: none;
}

.z-btn {
  display: flex;
  flex-direction: column;
  align-items: center;
  justify-content: space-between;
  flex: none;
  height: 48px;
  padding-top: 6px;
  font-family: "Lato", "Open Sans", sans-serif;
  font-size: 12px;
  white-space: nowrap;
}

.z-btn span {
  line-height: 16px;
}

.z-caret {
  flex: none;
  height: 24px;
  display: flex;
  align-items: center;
  justify-content: center;
  padding-top: 8px;
}

.c-16 {
  width: 16px;
}

.c-10 {
  width: 10px;
}

.c-52 {
  width: 52.5px;
}

.w-unmute {
  width: 50px;
  margin-left: 20px;
}

.w-video {
  width: 66px;
  margin-left: 19px;
}

.w-part {
  width: 62px;
}

.part-ic {
  display: flex;
  gap: 3px;
  align-items: flex-start;
}

.part-ic small {
  font-size: 10px;
  line-height: 10px;
}

.w-chat {
  width: 44px;
}

.w-share {
  width: 90px;
  margin-left: 21px;
}

.share-ic {
  width: 24px;
  height: 18px;
  background-color: #23d959;
  border-radius: 3px;
  display: flex;
  align-items: center;
  justify-content: center;
  margin-top: 2px;
}

.green {
  color: #23d959;
}

.w-rec {
  width: 60px;
  margin-left: 14px;
}

.w-react {
  width: 70px;
  margin-left: 15px;
}

.w-apps {
  width: 40px;
  margin-left: 25px;
}

.leave {
  position: absolute;
  right: 12px;
  top: 13px;
  width: 61px;
  height: 27px;
  background-color: #b02a2a;
  color: #fff;
  border: 0;
  border-radius: 7px;
  font-family: "Lato", sans-serif;
  font-weight: bold;
  font-size: 12px;
}

/* overlays from the zoom client */
.banner {
  position: absolute;
  left: 532px;
  top: 0;
  width: 356px;
  height: 22px;
  display: flex;
  border-radius: 0 0 5px 5px;
  overflow: hidden;
  font-family: "Lato", sans-serif;
  z-index: 5;
  white-space: nowrap;
}

.banner-green {
  width: 235px;
  background-color: #23d959;
  color: #1b5a33;
  font-weight: bold;
  text-align: center;
  line-height: 22px;
  font-size: 12.5px;
}

.banner-dark {
  width: 121px;
  background-color: #1a1a1a;
  color: #eee;
  font-weight: bold;
  padding-left: 29px;
  line-height: 21px;
  font-size: 11.5px;
}

.secure {
  position: absolute;
  left: 8px;
  top: 8px;
  width: 24px;
  height: 24px;
  border-radius: 5px;
  background-color: #333;
  display: flex;
  align-items: center;
  justify-content: center;
  z-index: 5;
}

.recording {
  position: absolute;
  left: 47px;
  top: 12px;
  display: flex;
  align-items: center;
  gap: 7px;
  font-family: "Lato", sans-serif;
  font-size: 12px;
  line-height: 16px;
  color: #dfe5ef;
  z-index: 5;
}

.recording i {
  width: 10px;
  height: 10px;
  border-radius: 50%;
  background-color: #f0444a;
}

.view-pill {
  position: absolute;
  left: 1304px;
  top: 8px;
  width: 62px;
  height: 25px;
  border-radius: 5px;
  background-color: rgba(150, 150, 150, .55);
  display: flex;
  align-items: center;
  gap: 4px;
  padding-left: 8px;
  font-family: "Lato", sans-serif;
  font-size: 12.5px;
  color: #f0f0f0;
  z-index: 5;
}

.cursor {
  position: absolute;
  left: 1005px;
  top: 497px;
  z-index: 5;
}
```
